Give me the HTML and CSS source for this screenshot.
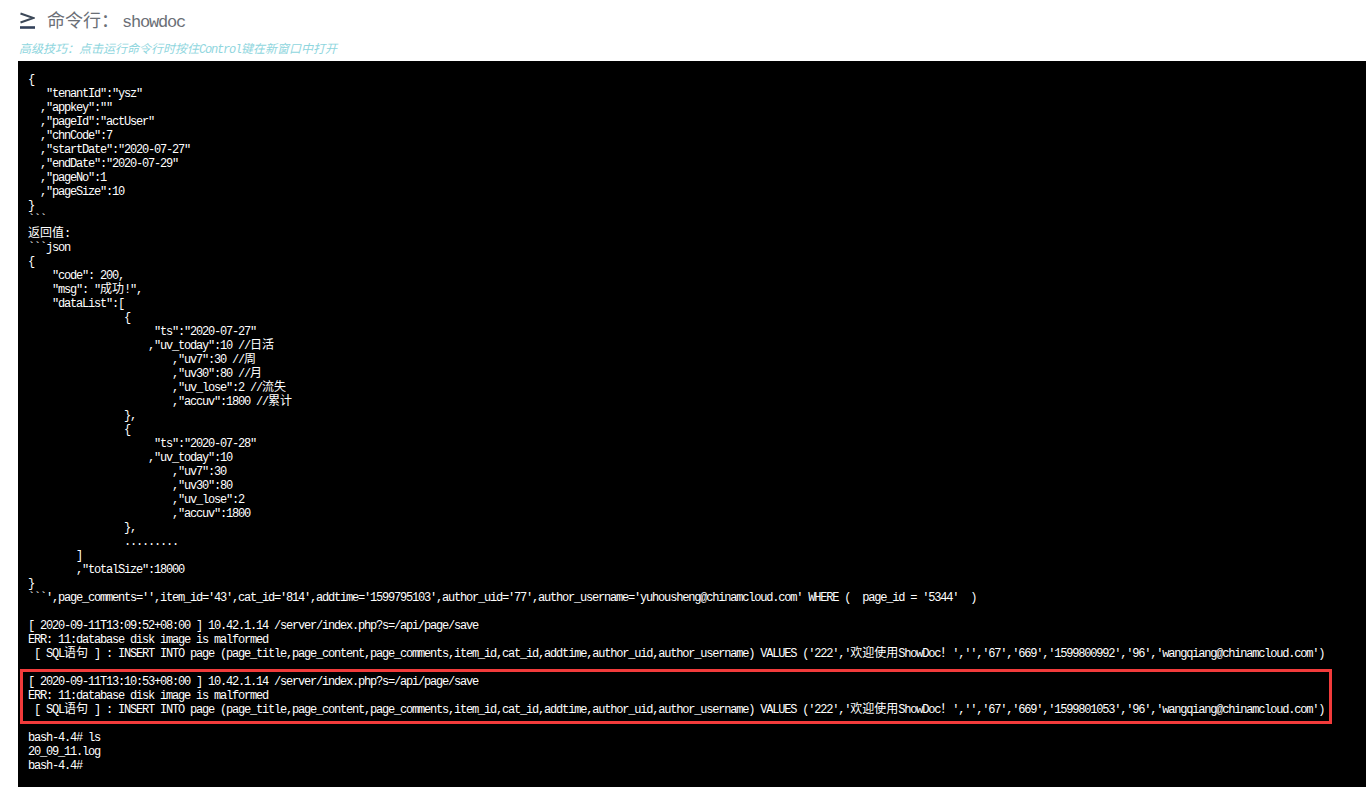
FILE: index.html
```html
<!DOCTYPE html>
<html lang="zh">
<head>
<meta charset="utf-8">
<title>命令行: showdoc</title>
<link rel="stylesheet" href="styles.css">
</head>
<body>
<header class="head">
<h1 class="title"><svg class="prompt" width="15" height="18" viewBox="0 0 15 18"><path d="M0.5 1.5 13.5 6 0.5 10.5" fill="none" stroke="#3c4858" stroke-width="2"/><path d="M0 15.5h15" fill="none" stroke="#33415a" stroke-width="2.6"/></svg><span class="title-text">命令行：<span class="mono">showdoc</span></span></h1>
<p class="tip">高级技巧：点击运行命令行时按住<span class="mono-s">Control</span>键在新窗口中打开</p>
</header>
<main class="term">
<pre class="out">{
   "tenantId":"ysz"
  ,"appkey":""
  ,"pageId":"actUser"
  ,"chnCode":7
  ,"startDate":"2020-07-27"
  ,"endDate":"2020-07-29"
  ,"pageNo":1
  ,"pageSize":10
}
&#96;&#96;&#96;
<span class="zh">返回值</span>:
&#96;&#96;&#96;json
{
    "code": 200,
    "msg": "<span class="zh">成功</span>!",
    "dataList":[
                {
                     "ts":"2020-07-27"
                    ,"uv_today":10 //<span class="zh">日活</span>
                        ,"uv7":30 //<span class="zh">周</span>
                        ,"uv30":80 //<span class="zh">月</span>
                        ,"uv_lose":2 //<span class="zh">流失</span>
                        ,"accuv":1800 //<span class="zh">累计</span>
                },
                {
                     "ts":"2020-07-28"
                    ,"uv_today":10
                        ,"uv7":30
                        ,"uv30":80
                        ,"uv_lose":2
                        ,"accuv":1800
                },
                .........
        ]
        ,"totalSize":18000
}
&#96;&#96;&#96;',page_comments='',item_id='43',cat_id='814',addtime='1599795103',author_uid='77',author_username='yuhousheng@chinamcloud.com' WHERE (  page_id = '5344'  )

[ 2020-09-11T13:09:52+08:00 ] 10.42.1.14 /server/index.php?s=/api/page/save
ERR: 11:database disk image is malformed
 [ SQL<span class="zh">语句</span> ] : INSERT INTO page (page_title,page_content,page_comments,item_id,cat_id,addtime,author_uid,author_username) VALUES ('222','<span class="zh">欢迎使用</span>ShowDoc<span class="zh">！</span>','','67','669','1599800992','96','wangqiang@chinamcloud.com')

[ 2020-09-11T13:10:53+08:00 ] 10.42.1.14 /server/index.php?s=/api/page/save
ERR: 11:database disk image is malformed
 [ SQL<span class="zh">语句</span> ] : INSERT INTO page (page_title,page_content,page_comments,item_id,cat_id,addtime,author_uid,author_username) VALUES ('222','<span class="zh">欢迎使用</span>ShowDoc<span class="zh">！</span>','','67','669','1599801053','96','wangqiang@chinamcloud.com')

bash-4.4# ls
20_09_11.log
bash-4.4#</pre>
<div class="mark"></div>
</main>
</body>
</html>
```
FILE: styles.css
```css
html, body {
  margin: 0;
  padding: 0;
  background: #fff;
}
body {
  width: 1366px;
  height: 798px;
  overflow: hidden;
}
.head {
  height: 61px;
  padding-left: 19px;
  box-sizing: border-box;
}
.title {
  display: flex;
  align-items: center;
  margin: 0;
  padding-top: 11px;
  height: 19px;
  font-weight: 400;
  font-size: 18px;
  line-height: 19px;
  color: #6b6f76;
  font-family: "Noto Sans CJK SC", sans-serif;
}
.prompt {
  margin-left: 1px;
  margin-right: 12px;
  flex: none;
}
.title-text {
  white-space: pre;
}
.mono {
  margin-left: 3px;
  font-family: "Liberation Mono", monospace;
  font-size: 17px;
  letter-spacing: -1.2px;
}
.tip {
  margin: 11px 0 0;
  font-size: 12px;
  line-height: 14px;
  font-style: italic;
  color: #8fd6de;
  font-family: "Noto Sans CJK SC", sans-serif;
  white-space: pre;
}
.mono-s {
  font-family: "Liberation Mono", monospace;
  font-size: 12px;
  letter-spacing: -1.2px;
}
.term {
  position: relative;
  margin-left: 18px;
  height: 726px;
  padding: 12px 10px 0;
  box-sizing: border-box;
  background: #000;
}
.out {
  margin: 0;
  font-family: "Liberation Mono", monospace;
  font-size: 12px;
  letter-spacing: -1.2px;
  line-height: 14px;
  color: #fff;
  white-space: pre;
}
.zh {
  font-family: "Noto Sans CJK SC", sans-serif;
  font-size: 12px;
  letter-spacing: 0;
  line-height: 0;
}
.mark {
  position: absolute;
  left: 2px;
  top: 608px;
  width: 1312px;
  height: 55px;
  box-sizing: border-box;
  border: 3px solid #f23b3b;
}
```
